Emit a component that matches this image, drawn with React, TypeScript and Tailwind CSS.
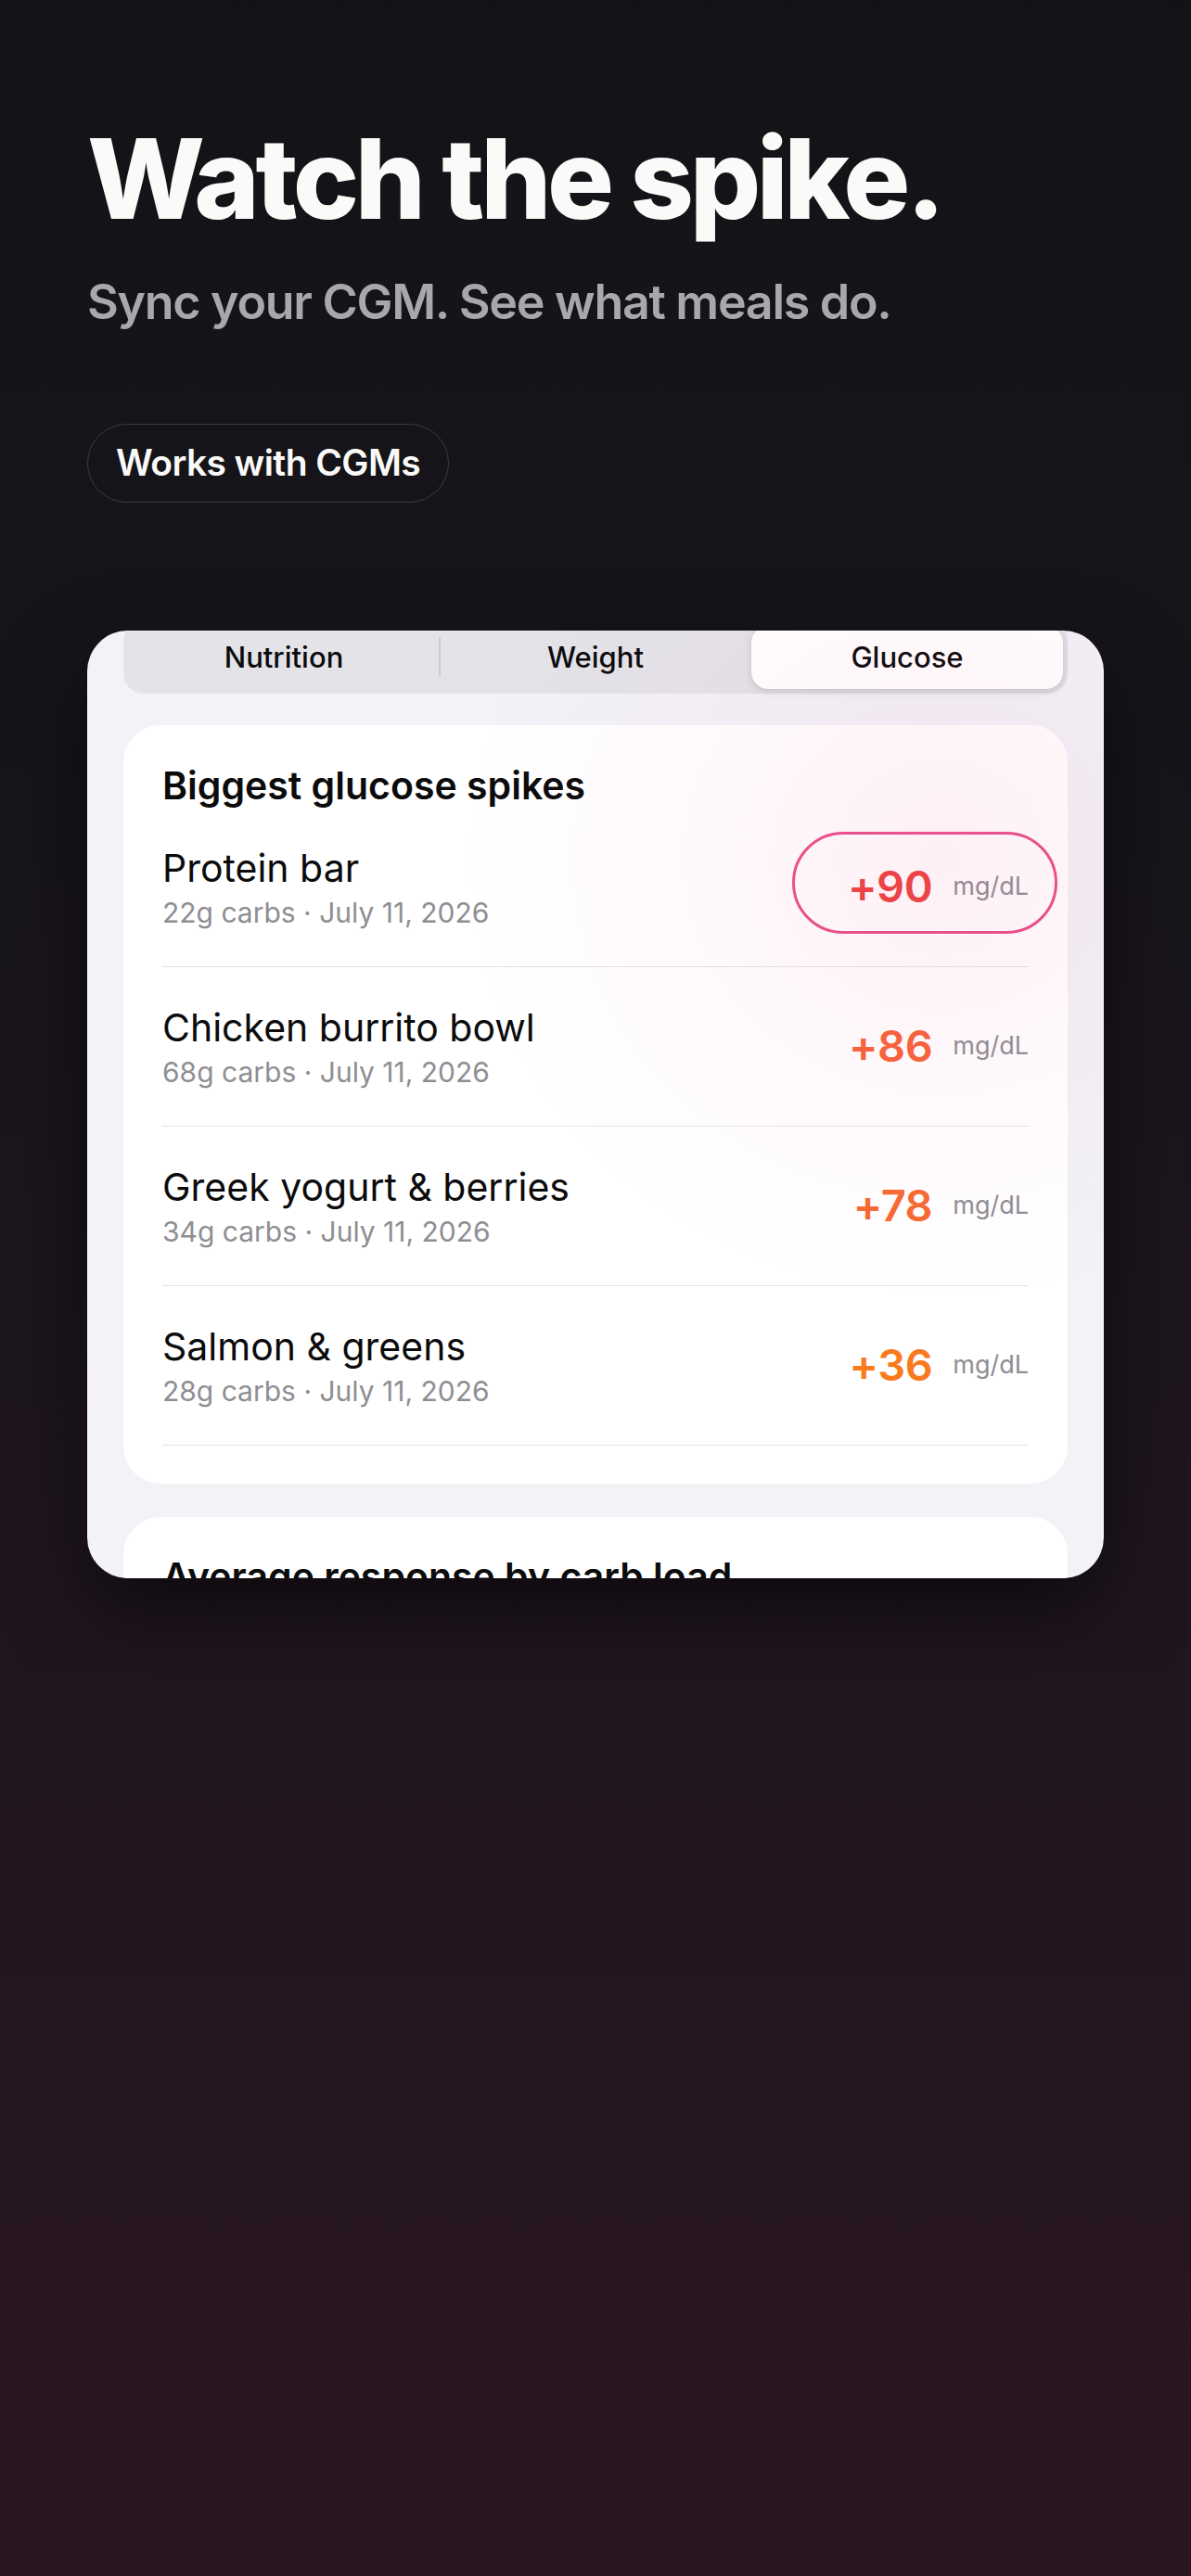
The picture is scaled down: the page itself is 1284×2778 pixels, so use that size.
const spikes = [
  { name: 'Protein bar', carbs: '22g carbs', value: '+90', color: 'text-[#ec4140]', ring: true },
  { name: 'Chicken burrito bowl', carbs: '68g carbs', value: '+86', color: 'text-[#f6633a]', ring: false },
  { name: 'Greek yogurt & berries', carbs: '34g carbs', value: '+78', color: 'text-[#f76a32]', ring: false },
  { name: 'Salmon & greens', carbs: '28g carbs', value: '+36', color: 'text-[#fa7a1e]', ring: false },
]

const tabs = ['Nutrition', 'Weight', 'Glucose']

function SpikeRow({ name, carbs, value, color, ring }: (typeof spikes)[number]) {
  return (
    <div className="flex items-center justify-between border-b-[1.5px] border-[#e3e3e6] pt-[41px] pb-[40px]">
      <div className="flex flex-col gap-[6px]">
        <span className="text-[41px] leading-[48px] text-[#0b0b0c]">{name}</span>
        <span className="text-[30px] leading-[36px] text-[#8e8e93]">{carbs} · July 11, 2026</span>
      </div>
      <div className="relative -mt-[2px] flex items-center gap-[22px]">
        {ring && (
          <div className="pointer-events-none absolute left-[-60px] right-[-31px] top-1/2 -mt-[59px] h-[110px] rounded-full border-[3px] border-[#e8508a]" />
        )}
        <span className={`text-[47px] leading-[56px] font-semibold tracking-[-0.01em] ${color}`}>{value}</span>
        <span className="text-[27px] leading-[32px] text-[#8e8e93]">mg/dL</span>
      </div>
    </div>
  )
}

export default function App() {
  return (
    <div className="min-h-[2778px] w-full bg-[linear-gradient(180deg,#131317_0%,#17151b_30%,#211620_65%,#2a1620_100%)] px-[94px] pt-[133px] font-['Inter','Liberation_Sans',sans-serif]">
      <h1 className="text-[120px] leading-[1] font-extrabold tracking-[-0.037em] text-[#fafaf8]">
        Watch the spike.
      </h1>
      <p className="mt-[42px] text-[52px] leading-[1.2] font-semibold tracking-[-0.025em] text-[#a7a7ac]">
        Sync your CGM. See what meals do.
      </p>
      <div className="mt-[100px] w-fit rounded-full border-[1.5px] border-[#3b3b41] px-[30px] py-[18px] text-[39px] leading-[1.2] font-semibold tracking-[-0.015em] text-[#fafaf8]">
        Works with CGMs
      </div>

      <div className="relative mt-[138px] h-[1022px] overflow-hidden rounded-[44px] bg-[#f2f2f7] px-[39px] shadow-[0_40px_90px_rgba(0,0,0,0.55)]">
        <div className="-mt-[10px] grid grid-cols-3 rounded-[22px] bg-[#e3e3e8] p-[5px]">
          {tabs.map((tab, i) => (
            <div
              key={tab}
              className={`relative py-[16px] text-center text-[31px] leading-[36px] font-medium text-[#0b0b0c] ${
                tab === 'Glucose'
                  ? 'rounded-[18px] bg-white shadow-[0_3px_8px_rgba(0,0,0,0.12),0_0_1px_rgba(0,0,0,0.15)]'
                  : ''
              }`}
            >
              {tab}
              {i === 0 && <span className="absolute right-[-1px] top-[12px] h-[43px] w-[2px] bg-[#cbcbd0]" />}
            </div>
          ))}
        </div>

        <div className="mt-[34px] rounded-[40px] bg-white px-[42px] pt-[41px] pb-[41px]">
          <h2 className="text-[41px] leading-[48px] font-semibold text-[#0b0b0c]">
            Biggest glucose spikes
          </h2>
          {spikes.map((s) => (
            <SpikeRow key={s.name} {...s} />
          ))}
        </div>

        <div className="mt-[36px] rounded-[40px] bg-white px-[42px] pt-[40px] pb-[40px]">
          <h2 className="text-[41px] leading-[48px] font-semibold text-[#0b0b0c]">
            Average response by carb load
          </h2>
        </div>

        <div className="pointer-events-none absolute inset-0 bg-[radial-gradient(ellipse_520px_480px_at_84%_24%,rgba(240,90,150,0.09),rgba(240,90,150,0.04)_50%,transparent_100%)]" />
      </div>
    </div>
  )
}
